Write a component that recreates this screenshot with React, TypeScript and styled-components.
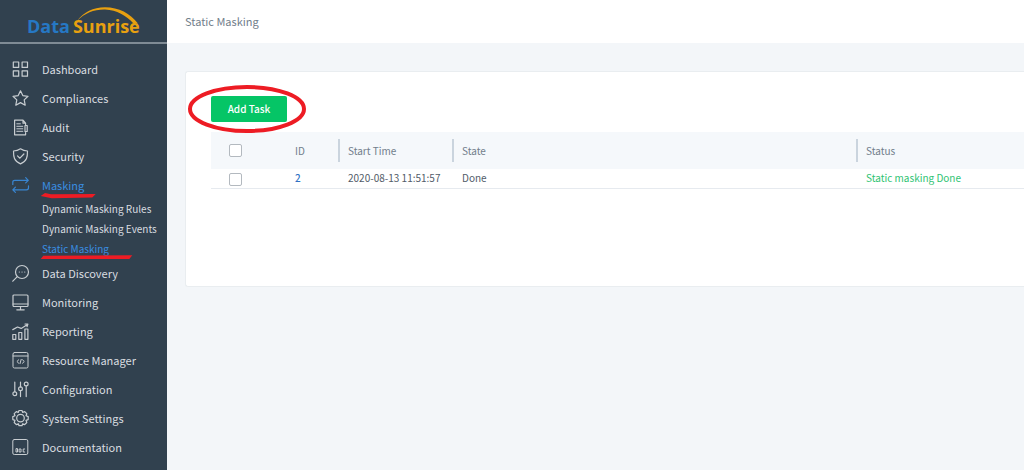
import React from "react";
import styled, { createGlobalStyle } from "styled-components";

const GlobalStyle = createGlobalStyle`
  *, *::before, *::after { box-sizing: border-box; }
  body {
    margin: 0;
    background: #f3f6f9;
    font-family: "Noto Sans CJK SC", "Noto Sans", sans-serif;
    font-size: 11px;
    line-height: 20px;
    color: #5b6572;
  }
`;

const Layout = styled.div`
  display: flex;
  min-height: 100vh;
`;

const Sidebar = styled.aside`
  flex: 0 0 167px;
  min-width: 0;
  background: #31414f;
`;

const Logo = styled.a`
  position: relative;
  display: flex;
  gap: 3px;
  height: 44px;
  padding: 15px 0 0 27px;
  border-bottom: 2px solid #7f8b95;
  font-family: "Open Sans", sans-serif;
  font-size: 18px;
  font-weight: 700;
  line-height: 22px;
  text-decoration: none;
`;

const LogoWord = styled.span<{ $color: string }>`
  color: ${(p) => p.$color};
`;

const LogoArc = styled.svg`
  position: absolute;
  left: 0;
  top: 0;
`;

const Menu = styled.ul`
  list-style: none;
  margin: 0;
  padding: 10px 0 0;
`;

const SubMenu = styled.ul`
  list-style: none;
  margin: 0 0 -1px;
  padding: 0;
`;

const Item = styled.li`
  position: relative;
`;

const MenuLink = styled.a<{ $active?: boolean }>`
  display: flex;
  align-items: center;
  gap: 12px;
  height: 29px;
  padding-left: 12px;
  color: ${(p) => (p.$active ? "#3a8de0" : "#d9dde0")};
  text-decoration: none;
  white-space: nowrap;
`;

const SubLink = styled(MenuLink)`
  height: 20px;
  padding-left: 42px;
  font-size: 10px;
`;

const Icon = styled.svg`
  flex: none;
  fill: none;
  stroke: currentColor;
  stroke-width: 1.2;
  stroke-linejoin: round;
  stroke-linecap: round;
  opacity: 0.9;
`;

const Marker = styled.svg`
  position: absolute;
  left: 40px;
  bottom: 0;
  fill: #ed1c24;
  pointer-events: none;
`;

const Content = styled.div`
  flex: 1;
  min-width: 0;
`;

const Header = styled.header`
  height: 43px;
  padding: 11px 18px;
  background: #fff;
`;

const Title = styled.h1`
  margin: 0;
  font-size: 11px;
  line-height: 20px;
  font-weight: 400;
  color: #727e8b;
`;

const Card = styled.main`
  margin: 28px 0 0 18px;
  min-height: 216px;
  padding: 24px 0 0 26px;
  background: #fff;
  border: 1px solid #e9edf0;
  border-right: 0;
  border-radius: 3px 0 0 3px;
`;

const Toolbar = styled.div`
  position: relative;
  display: flex;
  margin: 0 0 10px -1px;
`;

const Button = styled.button`
  width: 76px;
  height: 26px;
  padding: 0 0 1px;
  border: 0;
  border-radius: 2px;
  background: #05c566;
  color: #fff;
  font-family: inherit;
  font-size: 10px;
  font-weight: 500;
`;

const Ring = styled.svg`
  position: absolute;
  left: -24px;
  top: -12px;
  fill: none;
  stroke: #ed1c24;
  stroke-width: 4;
  pointer-events: none;
`;

const Table = styled.table`
  width: calc(100% + 1px);
  margin-left: -1px;
  table-layout: fixed;
  border-collapse: collapse;
  font-size: 10px;
  text-align: left;
`;

const Col = styled.col<{ $width?: number }>`
  width: ${(p) => (p.$width ? p.$width + "px" : "auto")};
`;

const Th = styled.th`
  height: 37px;
  padding: 0 0 1px;
  background: #f5f8fb;
  font-weight: 400;
  color: #727e8b;
`;

const HeadLabel = styled.span<{ $divider?: boolean }>`
  display: block;
  padding-left: 8px;
  border-left: 2px solid ${(p) => (p.$divider ? "#cad4de" : "transparent")};
  line-height: 23px;
`;

const Td = styled.td<{ $done?: boolean }>`
  height: 19px;
  padding: 0 0 0 10px;
  border-bottom: 1px solid #e6eaef;
  line-height: 18px;
  color: ${(p) => (p.$done ? "#2fc373" : "#525c69")};
`;

const IdLink = styled.a`
  color: #2f72c4;
  font-weight: 500;
  text-decoration: none;
`;

const Check = styled.input`
  display: block;
  appearance: none;
  width: 13px;
  height: 13px;
  margin: 0 0 0 18px;
  border: 1px solid #b3b9bf;
  border-radius: 2px;
  background: #fff;
`;

const CheckCell = styled(Td)`
  padding: 2px 0 0;
`;

const icons: Record<string, React.ReactNode> = {
  Dashboard: (
    <>
      <rect x="1.300" y="1" width="5.400" height="5.400" />
      <rect x="10.100" y="1" width="5.400" height="5.400" />
      <rect x="1.300" y="9.800" width="5.400" height="5.400" />
      <rect x="10.100" y="9.800" width="5.400" height="5.400" />
    </>
  ),
  Compliances: <path d="M8.5 .8l2.300 4.800 5.200.7-3.800 3.600 1 5.300-4.700-2.600-4.700 2.600 1-5.300L1 6.300l5.200-.7z" />,
  Audit: (
    <>
      <path d="M13.600 5.500V4.200L11 1.200H2.600v14.600h11v-2.200M11 1.200v3h2.600" />
      <path d="M4.800 4.800h3.600M4.800 7.300h6M4.800 9.800h6M4.800 12.300h6" strokeWidth="1" />
      <rect x="13" y="6.500" width="2.200" height="6" />
    </>
  ),
  Security: (
    <>
      <path d="M8.500 .8c2.200 1.600 4.500 2.200 7 2.200 0 5.800-.3 10-7 12.900C1.800 13 1.500 8.800 1.500 3c2.500 0 4.800-.6 7-2.200z" />
      <path d="M5.500 7.900l2.400 2.300 4-4.200" />
    </>
  ),
  Masking: (
    <>
      <path d="M.8 7.500V5.300c0-1.400.7-2 2-2h13.400M13.700 .7l2.600 2.600-2.600 2.600" />
      <path d="M16.500 8.800v2c0 1.400-.7 2-2 2H.8M3.400 10.200L.8 12.800l2.600 2.600" />
    </>
  ),
  "Data Discovery": (
    <>
      <circle cx="10" cy="7" r="6.500" />
      <path d="M5.300 11.600L.8 16.200M7.300 7h.1M10 7h.1M12.700 7h.1" />
    </>
  ),
  Monitoring: (
    <>
      <rect x="1" y="1" width="15" height="11.500" rx="1" />
      <path d="M1 10h15M8.500 12.500v3M4.800 15.800h7.400" />
    </>
  ),
  Reporting: (
    <>
      <path d="M.8 16.300v-4.800h3v4.800zM6.800 16.300V9.500h3v6.800zM12.900 16.300V6h3v10.300z" />
      <path d="M.8 6.600l4.700-2.600 3.700 1.400 6.300-4M13 1l2.900.1-.9 2.600" />
    </>
  ),
  "Resource Manager": (
    <g strokeWidth="1">
      <rect x="1" y=".5" width="15" height="15.500" rx="1.500" />
      <path d="M1 4h15M6.700 7.800L4.900 9.500l1.800 1.700M10.500 7.800l1.800 1.700-1.800 1.700M9.200 7.400l-1.200 4.200" />
    </g>
  ),
  Configuration: (
    <>
      <path d="M2.800 1v9.600M8.500 1v5M8.500 9.800v5.800M14.200 5v10.600" />
      <circle cx="2.800" cy="12.800" r="1.900" />
      <circle cx="8.500" cy="7.800" r="1.900" />
      <circle cx="14.200" cy="3" r="1.900" />
    </>
  ),
  "System Settings": (
    <>
      <path d="M7 .5h3l.6 1.900 2.100-.8 2.100 2.100-.8 2.100 2.200.8v3l-2.200.8.8 2.100-2.100 2.100-2.100-.8L10 15.700H7l-.6-1.900-2.100.8-2.100-2.100.8-2.100L.8 9.600v-3L3 5.800l-.8-2.100 2.100-2.100 2.100.8z" />
      <circle cx="8.500" cy="8.100" r="3.800" />
    </>
  ),
  Documentation: (
    <g strokeWidth="1">
      <rect x=".8" y=".5" width="15" height="15" rx="1.500" />
      <path d="M4 10v3h1.500v-3zM7.500 10h1.500v3H7.500zM12.700 10h-1.500v3h1.500" />
    </g>
  ),
};

const submenu = ["Dynamic Masking Rules", "Dynamic Masking Events", "Static Masking"];

export default function App() {
  return (
    <Layout>
      <GlobalStyle />
      <Sidebar>
        <Logo href="#">
          <LogoWord $color="#2678c4">Data</LogoWord>
          <LogoWord $color="#e8a010">Sunrise</LogoWord>
          <LogoArc width="167" height="42" aria-hidden="true">
            <path d="M77 21C84 12 93 7.200 105 7.200c14 .2 25 6 33 16.300h-4.500C126 15.500 117 10.200 105 9.600 94 9.400 85 13 77 21z" fill="#e8a010" />
          </LogoArc>
        </Logo>
        <nav>
          <Menu>
            {Object.keys(icons).map((name) => (
              <Item key={name}>
                <Item as="div">
                  <MenuLink href="#" $active={name === "Masking"}>
                    <Icon width="18" height="18" viewBox="0 -1 18 18" aria-hidden="true">
                      {icons[name]}
                    </Icon>
                    {name}
                  </MenuLink>
                  {name === "Masking" && (
                    <Marker width="56" height="8" aria-hidden="true">
                      <path d="M.7 5L5 2l6 1.300 44.700-.3-3.400 3.600-40.600.6z" />
                    </Marker>
                  )}
                </Item>
                {name === "Masking" && (
                  <SubMenu>
                    {submenu.map((sub) => (
                      <Item key={sub}>
                        <SubLink href="#" $active={sub === "Static Masking"}>
                          {sub}
                        </SubLink>
                        {sub === "Static Masking" && (
                          <Marker width="94" height="4" aria-hidden="true">
                            <path d="M.7 4l2.600-3.200 89-.6L89.300 4z" />
                          </Marker>
                        )}
                      </Item>
                    ))}
                  </SubMenu>
                )}
              </Item>
            ))}
          </Menu>
        </nav>
      </Sidebar>
      <Content>
        <Header>
          <Title>Static Masking</Title>
        </Header>
        <Card>
          <Toolbar>
            <Button type="button">Add Task</Button>
            <Ring width="120" height="50" aria-hidden="true">
              <ellipse cx="60" cy="25" rx="57" ry="22" />
            </Ring>
          </Toolbar>
          <Table>
            <colgroup>
              <Col $width={74} />
              <Col $width={53} />
              <Col $width={114} />
              <Col />
              <Col $width={168} />
            </colgroup>
            <thead>
              <tr>
                <Th>
                  <Check type="checkbox" aria-label="Select all tasks" />
                </Th>
                <Th><HeadLabel>ID</HeadLabel></Th>
                <Th><HeadLabel $divider>Start Time</HeadLabel></Th>
                <Th><HeadLabel $divider>State</HeadLabel></Th>
                <Th><HeadLabel $divider>Status</HeadLabel></Th>
              </tr>
            </thead>
            <tbody>
              <tr>
                <CheckCell>
                  <Check type="checkbox" aria-label="Select task 2" />
                </CheckCell>
                <Td><IdLink href="#">2</IdLink></Td>
                <Td>2020-08-13 11:51:57</Td>
                <Td>Done</Td>
                <Td $done>Static masking Done</Td>
              </tr>
            </tbody>
          </Table>
        </Card>
      </Content>
    </Layout>
  );
}
